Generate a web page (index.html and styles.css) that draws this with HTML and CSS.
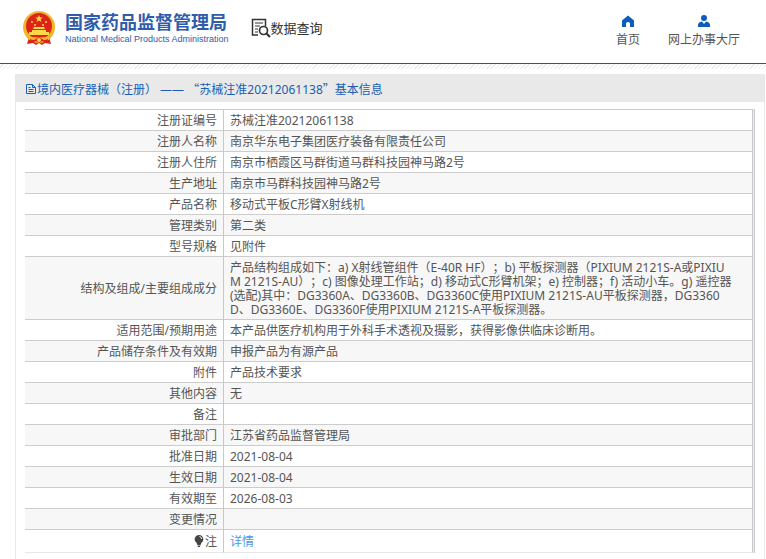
FILE: index.html
```html
<!DOCTYPE html>
<html lang="zh-CN">

<head>
    <meta charset="UTF-8">
    <meta name="viewport" content="width=device-width, initial-scale=1.0">
    <title>国家药品监督管理局 数据查询</title>
    <link rel="stylesheet" href="styles.css">
</head>

<body>
    <header class="header">
        <a class="logo" href="#">
            <svg class="emblem" viewBox="0 0 34 36" aria-hidden="true">
                <path d="M7 27 L5 34 L11 33 L14 35 L17 33 L20 35 L23 33 L29 34 L27 27Z" fill="#d8261c" />
                <circle cx="17" cy="17" r="16" fill="#f3b52b" />
                <circle cx="17" cy="16" r="13" fill="#dc2418" />
                <path d="M17 5l1 2.600h2.800l-2.200 1.700.8 2.700-2.400-1.600-2.400 1.600.8-2.700-2.200-1.700H16z" fill="#ffd84a" />
                <g fill="#ffd84a">
                    <circle cx="10" cy="12" r="1" />
                    <circle cx="13" cy="15" r="1" />
                    <circle cx="21" cy="15" r="1" />
                    <circle cx="24" cy="12" r="1" />
                    <path d="M12 17h10l1 2H11zM10 20h14v2h3v3H7v-3h3z" />
                </g>
                <path d="M4 25q13 5 26 0l-3 5H7z" fill="#f3b52b" />
                <path d="M8 29q4 2 6 0 3-3 6 0 2 2 6 0l-1 4-5-2-3 2-3-2-5 2z" fill="#d8261c" />
                <circle cx="17" cy="30" r="2" fill="#ffd84a" />
            </svg>
            <span class="logo-text">
                <span class="logo-cn">国家药品监督管理局</span>
                <span class="logo-en">National Medical Products Administration</span>
            </span>
        </a>
        <a class="search-title" href="#">
            <svg class="search-icon" viewBox="0 0 20 20" aria-hidden="true" fill="none" stroke="#333">
                <path d="M7 17H1.500V1.500h13V8" stroke-width="1.500" />
                <path d="M4 5h8M4 8h5M4 11h3M4 14h3" stroke-width="1.200" />
                <circle cx="12.500" cy="12.500" r="4" stroke-width="1.700" />
                <path d="M15.500 15.500l3.500 3.500" stroke-width="2.200" />
            </svg>
            <span>数据查询</span>
        </a>
        <nav class="nav">
            <a href="#">
                <svg viewBox="0 0 12 12" aria-hidden="true">
                    <path d="M6 0.500L0 5.500V12h4V8.500q0-1.500 2-1.500t2 1.500V12h4V5.500z" fill="#0b5cbb" />
                </svg>
                <span>首页</span>
            </a>
            <a href="#">
                <svg viewBox="0 0 12 12" aria-hidden="true">
                    <circle cx="6" cy="3" r="3" fill="#0b5cbb" />
                    <path d="M0 12V10q0-3 4-3.500L6 9l2-2.500q4 .5 4 3.500v2z" fill="#0b5cbb" />
                </svg>
                <span>网上办事大厅</span>
            </a>
        </nav>
    </header>
    <div class="hatch"></div>

    <main class="panel">
        <h1 class="panel-title">
            <svg class="doc-icon" viewBox="0 0 12 12" aria-hidden="true" fill="none" stroke="#1a5fb4">
                <path d="M1.500 1.500h6l3 3v6h-9zM7.500 1.500v3h3M3.500 4.500h2M3.500 6.500h5M3.500 8.500h5" />
            </svg>
            <span>境内医疗器械（注册） —— <span class="quote">“</span>苏械注准20212061138<span class="quote">”</span>基本信息</span>
        </h1>
        <div class="table-frame">
            <table class="info">
                <tr>
                    <th scope="row">注册证编号</th>
                    <td>苏械注准20212061138</td>
                </tr>
                <tr>
                    <th scope="row">注册人名称</th>
                    <td>南京华东电子集团医疗装备有限责任公司</td>
                </tr>
                <tr>
                    <th scope="row">注册人住所</th>
                    <td>南京市栖霞区马群街道马群科技园神马路2号</td>
                </tr>
                <tr>
                    <th scope="row">生产地址</th>
                    <td>南京市马群科技园神马路2号</td>
                </tr>
                <tr>
                    <th scope="row">产品名称</th>
                    <td>移动式平板C形臂X射线机</td>
                </tr>
                <tr>
                    <th scope="row">管理类别</th>
                    <td>第二类</td>
                </tr>
                <tr>
                    <th scope="row">型号规格</th>
                    <td>见附件</td>
                </tr>
                <tr>
                    <th scope="row">结构及组成/主要组成成分</th>
                    <td>产品结构组成如下：a) X射线管组件（E-40R HF）；b) 平板探测器（PIXIUM 2121S-A或PIXIU<br>M 2121S-AU）；c) 图像处理工作站；d) 移动式C形臂机架；e) 控制器；f) 活动小车。g) 遥控器<br>(选配)其中：DG3360A、DG3360B、DG3360C使用PIXIUM 2121S-AU平板探测器，DG3360<br>D、DG3360E、DG3360F使用PIXIUM 2121S-A平板探测器。</td>
                </tr>
                <tr>
                    <th scope="row">适用范围/预期用途</th>
                    <td>本产品供医疗机构用于外科手术透视及摄影，获得影像供临床诊断用。</td>
                </tr>
                <tr>
                    <th scope="row">产品储存条件及有效期</th>
                    <td>申报产品为有源产品</td>
                </tr>
                <tr>
                    <th scope="row">附件</th>
                    <td>产品技术要求</td>
                </tr>
                <tr>
                    <th scope="row">其他内容</th>
                    <td>无</td>
                </tr>
                <tr>
                    <th scope="row">备注</th>
                    <td></td>
                </tr>
                <tr>
                    <th scope="row">审批部门</th>
                    <td>江苏省药品监督管理局</td>
                </tr>
                <tr>
                    <th scope="row">批准日期</th>
                    <td>2021-08-04</td>
                </tr>
                <tr>
                    <th scope="row">生效日期</th>
                    <td>2021-08-04</td>
                </tr>
                <tr>
                    <th scope="row">有效期至</th>
                    <td>2026-08-03</td>
                </tr>
                <tr>
                    <th scope="row">变更情况</th>
                    <td></td>
                </tr>
                <tr class="note">
                    <th scope="row"><svg class="bulb" viewBox="0 0 10 12" aria-hidden="true">
                            <path d="M5 0a4.300 4.300 0 0 0-2.500 7.800L3.500 10h3l1-2.200A4.300 4.300 0 0 0 5 0zM3.500 10.500h3L6 12H4z" fill="#444" />
                            <path d="M5.500 1.500q2 .5 2.300 2.500" fill="none" stroke="#fff" />
                        </svg>注</th>
                    <td><a href="#">详情</a></td>
                </tr>
            </table>
        </div>
    </main>
</body>

</html>
```

FILE: styles.css
```css
* {
    box-sizing: border-box;
}

body {
    margin: 0;
    background-color: #fff;
    color: #555;
    font-family: "Noto Sans", "Noto Sans CJK SC", sans-serif;
    font-size: 12px;
    line-height: 14px;
    text-spacing-trim: space-all;
}

a {
    color: inherit;
    text-decoration: none;
}

.header {
    display: flex;
    align-items: center;
    height: 64px;
    padding: 0 26px 8px 22px;
    border-bottom: 1px solid #1c5a94;
}

.logo {
    display: flex;
    align-items: center;
    gap: 9px;
    color: #2f5cab;
}

.emblem {
    width: 34px;
    height: 36px;
}

.logo-text {
    display: flex;
    flex-direction: column;
}

.logo-cn {
    font-size: 18px;
    font-weight: bold;
    line-height: 22px;
}

.logo-en {
    font-family: "Liberation Sans", Arial, sans-serif;
    font-size: 9px;
    line-height: 12px;
    white-space: nowrap;
}

.search-title {
    display: flex;
    align-items: center;
    margin-left: 22px;
    color: #333;
    font-size: 13px;
}

.search-icon {
    width: 20px;
    height: 20px;
}

.nav {
    display: flex;
    gap: 28px;
    margin-left: auto;
    padding-top: 6px;
    color: #555;
}

.nav a {
    display: flex;
    flex-direction: column;
    align-items: center;
    gap: 6px;
}

.nav svg {
    width: 12px;
    height: 12px;
}

.hatch {
    height: 5px;
    background: repeating-linear-gradient(135deg, #fff 0 2px, #ececec 2px 3px);
}

.panel {
    margin: 5px 1px 0 15px;
    padding-bottom: 6px;
    border-left: 1px solid #e8e8e8;
    border-right: 1px solid #e8e8e8;
}

.panel-title {
    display: flex;
    align-items: center;
    height: 28px;
    margin: 0;
    padding: 2px 0 0 9px;
    background-color: #e9e9e9;
    color: #1a5fb4;
    font-size: 12px;
    font-weight: normal;
}

.quote {
    font-family: "Noto Sans CJK SC", sans-serif;
}

.doc-icon {
    width: 12px;
    height: 12px;
}

.table-frame {
    margin: 7px 9px 0;
    padding-right: 1px;
    border-right: 1px solid #c8c8cc;
    background-color: #ececf2;
}

.info {
    width: 100%;
    border-spacing: 0;
    border-top: 1px solid #ccc;
    table-layout: fixed;
    background-color: #fff;
}

.info tr:nth-child(even) {
    background-color: #f7f7f7;
}

.info th,
.info td {
    height: 21px;
    padding: 4px 6px 2px;
    border-right: 1px solid #c8c8cc;
    border-bottom: 1px solid #ccc;
    font-weight: normal;
    vertical-align: middle;
}

.info th {
    width: 199px;
    text-align: right;
}

.info td {
    text-align: left;
    word-break: break-all;
}

.info .note th,
.info .note td {
    height: 23px;
    border-bottom-color: #e8e8e8;
}

.info a {
    color: #4a98e8;
}

.bulb {
    width: 10px;
    height: 12px;
    margin-right: 1px;
    vertical-align: -1px;
}
```
